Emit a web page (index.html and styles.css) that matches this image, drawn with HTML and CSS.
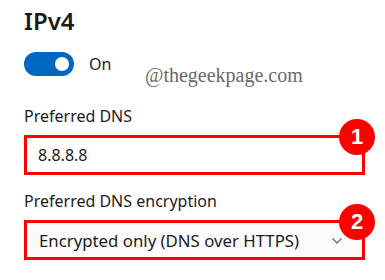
FILE: index.html
```
<!DOCTYPE html>
<html>
<head>
<meta charset="utf-8">
<title>IPv4 DNS settings</title>
<link rel="stylesheet" href="styles.css">
</head>
<body>
<div class="panel">
	<h1 class="title">IPv4</h1>

	<div class="toggle-row">
		<span class="toggle on"><span class="knob"></span></span>
		<span class="toggle-label">On</span>
	</div>

	<div class="field">
		<div class="field-label">Preferred DNS</div>
		<div class="box marked">
			<span class="box-text">8.8.8.8</span>
			<span class="badge">1</span>
		</div>
	</div>

	<div class="field">
		<div class="field-label">Preferred DNS encryption</div>
		<div class="box select marked">
			<span class="box-text">Encrypted only (DNS over HTTPS)</span>
			<svg class="chevron" width="10" height="6" viewBox="0 0 10 6"><path d="M0.5 0.5 L5 5 L9.5 0.5" fill="none" stroke="#5c5c5c" stroke-width="1.1"/></svg>
			<span class="badge">2</span>
		</div>
	</div>

	<div class="watermark">@thegeekpage.com</div>
</div>
</body>
</html>
```

FILE: styles.css
```
html, body {
	margin: 0;
	padding: 0;
	background: #fff;
}

.panel {
	position: relative;
	width: 341px;
	padding: 5px 20px 0 24px;
	font-family: "Noto Sans", "Open Sans", sans-serif;
	color: #1b1b1b;
}

.title {
	margin: 0;
	font-size: 24px;
	font-weight: 600;
	line-height: 32px;
}

.toggle-row {
	display: flex;
	align-items: center;
	gap: 15px;
	margin-top: 15px;
}

.toggle {
	display: flex;
	align-items: center;
	justify-content: flex-end;
	box-sizing: border-box;
	width: 50px;
	height: 24px;
	padding-right: 5px;
	border-radius: 12px;
	background: #0067c0;
}

.knob {
	display: block;
	width: 14px;
	height: 14px;
	border-radius: 50%;
	background: #fff;
}

.toggle-label {
	font-size: 16px;
	line-height: 22px;
}

.field {
	margin-top: 29px;
}

.field + .field {
	margin-top: 15px;
}

.field-label {
	font-size: 16px;
	line-height: 22px;
	margin-bottom: 8px;
}

.box {
	position: relative;
	display: flex;
	align-items: center;
	box-sizing: border-box;
	height: 40px;
	padding-left: 11px;
	background: #fff;
	font-size: 16px;
}

.box.marked {
	border: 3px solid #ff0000;
}

.box.select {
	background: #fbfbfb;
	padding-left: 12px;
	font-size: 16.8px;
}

.chevron {
	margin-left: auto;
	margin-right: 20px;
	margin-top: 2px;
}

.badge {
	position: absolute;
	right: -13px;
	top: -19px;
	width: 36px;
	height: 36px;
	border-radius: 50%;
	background: #ff0000;
	color: #fff;
	font-family: "Liberation Sans", Arial, sans-serif;
	font-weight: bold;
	font-size: 22px;
	line-height: 36px;
	text-align: center;
}

.watermark {
	position: absolute;
	left: 145px;
	top: 63px;
	font-family: "Liberation Serif", "DejaVu Serif", serif;
	font-size: 20px;
	line-height: 24px;
	color: #6a6a6a;
}
```
